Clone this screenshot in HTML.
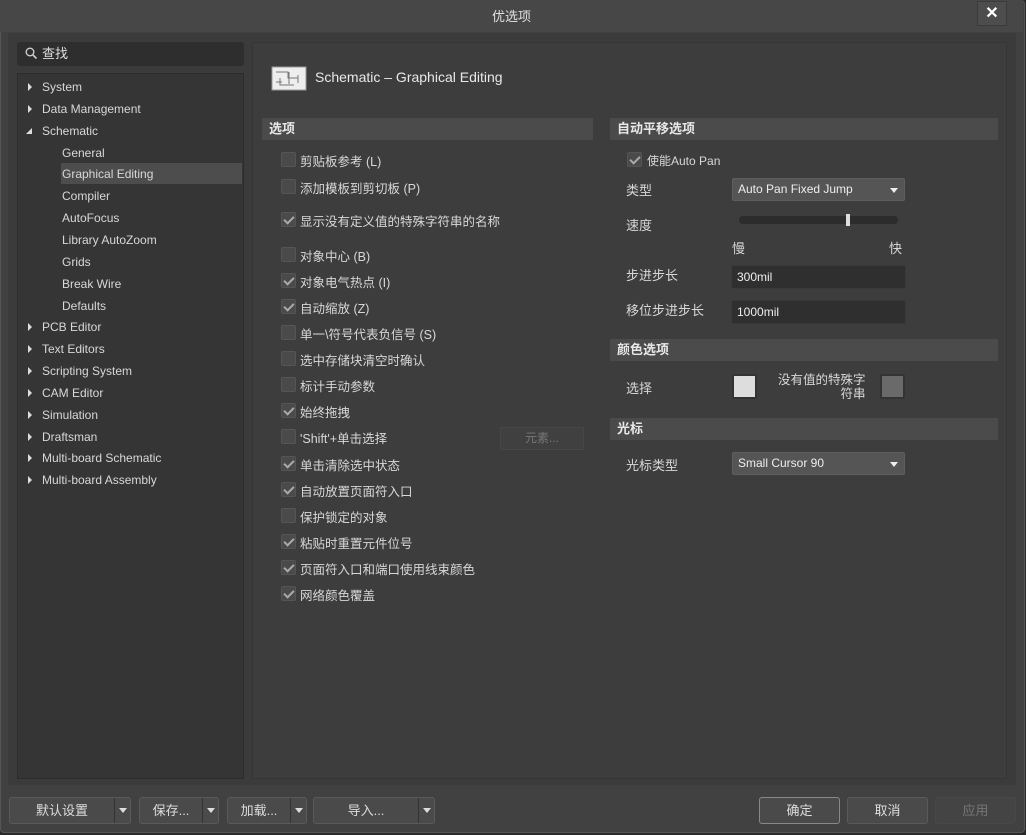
<!DOCTYPE html><html><head><meta charset="utf-8"><style>
*{box-sizing:border-box;margin:0;padding:0}
body{width:1026px;height:835px;background:#2a2a2a;font-family:"Liberation Sans","Noto Sans CJK SC",sans-serif;color:#d8d8d8;font-size:12px;position:relative;overflow:hidden}
.dlg{position:absolute;left:0;top:0;width:1025px;height:833px;background:#414141;border-radius:4px;box-shadow:inset 0 0 0 1px #555}
.a{position:absolute;white-space:nowrap}
.title{left:0;top:0;width:1023px;height:32px;background:#474747;text-align:center;line-height:33px;font-size:13px;color:#e0e0e0}
.cb{position:absolute;width:15px;height:15px;background:#4a4a4a;border:1px solid #555;border-radius:2px}
.cb.on::after{content:"";position:absolute;left:4px;top:1px;width:4px;height:8px;border:solid #aaa;border-width:0 2px 2px 0;transform:rotate(45deg)}
.hd{position:absolute;height:22px;background:#4b4b4b;font-weight:bold;line-height:22px;padding-left:7px;font-size:13px;color:#e8e8e8}
.tri{position:absolute;width:0;height:0;border-left:4px solid #ddd;border-top:4px solid transparent;border-bottom:4px solid transparent}
.dd{position:absolute;height:23px;background:#555;border:1px solid #5e5e5e;border-radius:2px;padding-left:5px;line-height:21px;color:#eee}
.dd::after{content:"";position:absolute;right:6px;top:9px;border-top:5px solid #eee;border-left:4px solid transparent;border-right:4px solid transparent}
.in{position:absolute;height:24px;background:#2f2f2f;border:1px solid #3a3a3a;border-radius:2px;padding-left:5px;line-height:22px;color:#eee}
.btn{position:absolute;top:797px;height:27px;background:#4a4a4a;border:1px solid #5a5a5a;border-radius:3px;text-align:center;line-height:25px;color:#ddd;font-size:13px}
.ar{position:absolute;top:0;right:0;width:16px;height:25px;border-left:1px solid #333}
.ar::after{content:"";position:absolute;left:4px;top:10px;border-top:5px solid #ddd;border-left:4px solid transparent;border-right:4px solid transparent}
</style></head><body><div class="dlg">
<div class="a title">优选项</div>
<div class="a" style="left:977px;top:1px;width:30px;height:25px;background:#4d4d4d;border:1px solid #3a3a3a;text-align:center;line-height:24px;font-size:16px;font-weight:bold;color:#fff">✕</div>
<div class="a" style="left:8px;top:33px;width:1008px;height:752px;background:#3b3b3b"></div>
<div class="a" style="left:17px;top:42px;width:227px;height:24px;background:#2e2e2e;border-radius:3px;padding-left:25px;line-height:23px;font-size:13px;color:#ddd">查找</div>
<svg class="a" style="left:25px;top:47px" width="13" height="13"><circle cx="5" cy="5" r="3.8" fill="none" stroke="#ccc" stroke-width="1.4"/><line x1="8" y1="8" x2="11.5" y2="11.5" stroke="#ccc" stroke-width="1.6"/></svg>
<div class="a" style="left:17px;top:73px;width:227px;height:706px;background:#353535;border:1px solid #2c2c2c"></div>
<div class="a" style="left:61px;top:163px;width:181px;height:21px;background:#4d4d4d"></div>
<div id="tree"></div>
<div class="a" style="left:252px;top:42px;width:755px;height:737px;background:#3d3d3d;border:1px solid #353535"></div>
<svg class="a" style="left:271px;top:66px" width="36" height="25"><rect x="1" y="1" width="34" height="23" fill="#eee" stroke="#999"/><path d="M5 6h12v6h10M9 12v7h14M5 16h6M18 6v12M27 9v8" stroke="#777" fill="none"/></svg>
<div class="a" style="left:315px;top:69px;font-size:14px;color:#e8e8e8">Schematic – Graphical Editing</div>
<div class="hd" style="left:262px;top:118px;width:331px">选项</div>
<div class="hd" style="left:610px;top:118px;width:388px">自动平移选项</div>
<div class="hd" style="left:610px;top:339px;width:388px">颜色选项</div>
<div class="hd" style="left:610px;top:418px;width:388px">光标</div>
<div id="opts"></div>
<div class="a" style="left:500px;top:427px;width:84px;height:23px;background:#404040;border:1px solid #474747;text-align:center;line-height:21px;color:#777">元素...</div>
<div class="cb on" style="left:627px;top:152px"></div><div class="a" style="left:647px;top:152px">使能Auto Pan</div>
<div class="a" style="left:626px;top:180px;font-size:13px">类型</div>
<div class="dd" style="left:732px;top:178px;width:173px">Auto Pan Fixed Jump</div>
<div class="a" style="left:626px;top:215px;font-size:13px">速度</div>
<div class="a" style="left:739px;top:216px;width:159px;height:8px;background:#2c2c2c;border-radius:4px"></div>
<div class="a" style="left:846px;top:214px;width:4px;height:12px;background:#ddd"></div>
<div class="a" style="left:732px;top:238px;font-size:13px">慢</div><div class="a" style="left:889px;top:238px;font-size:13px">快</div>
<div class="a" style="left:626px;top:265px;font-size:13px">步进步长</div>
<div class="in" style="left:731px;top:265px;width:175px">300mil</div>
<div class="a" style="left:626px;top:300px;font-size:13px">移位步进步长</div>
<div class="in" style="left:731px;top:300px;width:175px">1000mil</div>
<div class="a" style="left:626px;top:378px;font-size:13px">选择</div>
<div class="a" style="left:732px;top:374px;width:25px;height:25px;background:#ddd;border:2px solid #333;border-radius:2px"></div>
<div class="a" style="left:778px;top:373px;text-align:right;line-height:14px;font-size:12.5px">没有值的特殊字<br><span style="padding-left:62px">符串</span></div>
<div class="a" style="left:880px;top:374px;width:25px;height:25px;background:#6a6a6a;border:2px solid #333;border-radius:2px"></div>
<div class="a" style="left:626px;top:455px;font-size:13px">光标类型</div>
<div class="dd" style="left:732px;top:452px;width:173px">Small Cursor 90</div>
<div class="btn" style="left:9px;width:122px;padding-right:16px">默认设置<div class="ar"></div></div>
<div class="btn" style="left:139px;width:80px;padding-right:16px">保存...<div class="ar"></div></div>
<div class="btn" style="left:227px;width:80px;padding-right:16px">加载...<div class="ar"></div></div>
<div class="btn" style="left:313px;width:122px;padding-right:16px">导入...<div class="ar"></div></div>
<div class="btn" style="left:759px;width:81px;border-color:#888">确定</div>
<div class="btn" style="left:847px;width:81px">取消</div>
<div class="btn" style="left:935px;width:81px;background:#444;color:#777;border-color:#484848">应用</div>
</div>
<script>
var t=[["System",0,1],["Data Management",0,1],["Schematic",0,2],["General",1],["Graphical Editing",1],["Compiler",1],["AutoFocus",1],["Library AutoZoom",1],["Grids",1],["Break Wire",1],["Defaults",1],["PCB Editor",0,1],["Text Editors",0,1],["Scripting System",0,1],["CAM Editor",0,1],["Simulation",0,1],["Draftsman",0,1],["Multi-board Schematic",0,1],["Multi-board Assembly",0,1]];
var h="";t.forEach(function(e,i){var y=79+i*21.85;h+='<div class="a" style="left:'+(e[1]?62:42)+'px;top:'+y+'px;line-height:16px">'+e[0]+'</div>';if(e[2]==1)h+='<div class="tri" style="left:28px;top:'+(y+4)+'px"></div>';if(e[2]==2)h+='<div class="a" style="left:26px;top:'+(y+5)+'px;width:0;height:0;border-right:6px solid #ddd;border-top:6px solid transparent"></div>';});
document.getElementById("tree").innerHTML=h;
var o=[["剪贴板参考 (L)",160,0],["添加模板到剪切板 (P)",187,0],["显示没有定义值的特殊字符串的名称",220,1],["对象中心 (B)",255,0],["对象电气热点 (I)",281,1],["自动缩放 (Z)",307,1],["单一\\符号代表负信号 (S)",333,0],["选中存储块清空时确认",359,0],["标计手动参数",385,0],["始终拖拽",411,1],["'Shift'+单击选择",437,0],["单击清除选中状态",464,1],["自动放置页面符入口",490,1],["保护锁定的对象",516,0],["粘贴时重置元件位号",542,1],["页面符入口和端口使用线束颜色",568,1],["网络颜色覆盖",594,1]];
h="";o.forEach(function(e){h+='<div class="cb'+(e[2]?' on':'')+'" style="left:281px;top:'+(e[1]-8)+'px"></div><div class="a" style="left:300px;top:'+(e[1]-9)+'px;font-size:12.5px">'+e[0]+'</div>';});
document.getElementById("opts").innerHTML=h;
</script>
</body></html>
